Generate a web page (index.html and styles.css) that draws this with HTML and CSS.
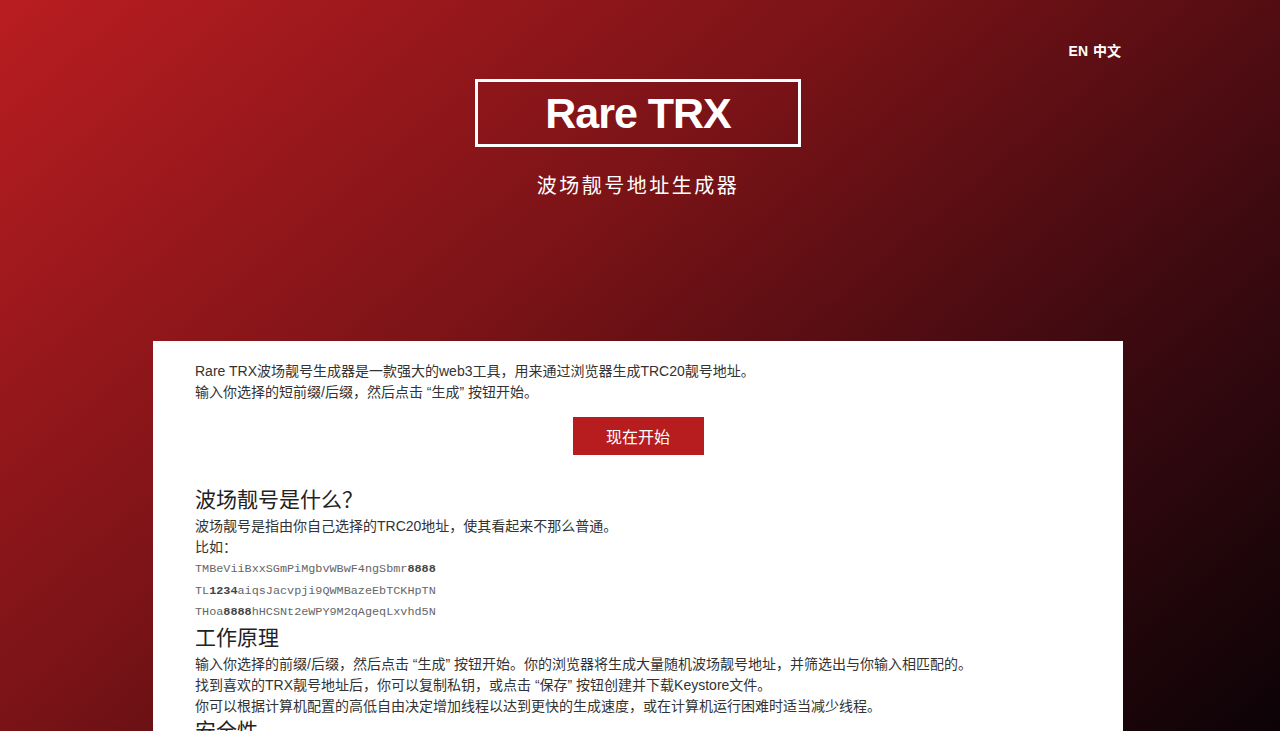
FILE: index.html
```html
<!DOCTYPE html>
<html lang="zh-CN">
<head>
<meta charset="utf-8">
<title>Rare TRX - 波场靓号地址生成器</title>
<link rel="stylesheet" href="styles.css">
</head>
<body>
<div class="page">
  <header class="hero">
    <nav class="lang">
      <a href="#" class="lang-link">EN</a>
      <a href="#" class="lang-link">中文</a>
    </nav>
    <div class="logo">Rare TRX</div>
    <div class="subtitle">波场靓号地址生成器</div>
  </header>
  <main class="card">
    <p class="text">Rare TRX波场靓号生成器是一款强大的web3工具，用来通过浏览器生成TRC20靓号地址。<br>输入你选择的短前缀/后缀，然后点击 “生成” 按钮开始。</p>
    <div class="cta-row"><button class="cta">现在开始</button></div>

    <h2 class="heading first">波场靓号是什么？</h2>
    <p class="text">波场靓号是指由你自己选择的TRC20地址，使其看起来不那么普通。<br>比如：</p>
    <div class="addr-list">
      <div class="addr">TMBeViiBxxSGmPiMgbvWBwF4ngSbmr<b>8888</b></div>
      <div class="addr">TL<b>1234</b>aiqsJacvpji9QWMBazeEbTCKHpTN</div>
      <div class="addr">THoa<b>8888</b>hHCSNt2eWPY9M2qAgeqLxvhd5N</div>
    </div>

    <h2 class="heading">工作原理</h2>
    <p class="text">输入你选择的前缀/后缀，然后点击 “生成” 按钮开始。你的浏览器将生成大量随机波场靓号地址，并筛选出与你输入相匹配的。<br>找到喜欢的TRX靓号地址后，你可以复制私钥，或点击 “保存” 按钮创建并下载Keystore文件。<br>你可以根据计算机配置的高低自由决定增加线程以达到更快的生成速度，或在计算机运行困难时适当减少线程。</p>

    <h2 class="heading">安全性</h2>
    <p class="text">所有地址均在你的浏览器本地生成，私钥不会通过网络传输。</p>
  </main>
</div>
</body>
</html>
```

FILE: styles.css
```css
html {
  min-height: 100%;
  background: linear-gradient(140deg, #b91d21 0%, #7a1317 40%, #3e0a10 70%, #0c0307 100%) fixed;
}
body {
  margin: 0;
  font-family: "Liberation Sans", "Noto Sans CJK SC", sans-serif;
  color: #333;
}
.page {
  width: 970px;
  margin: 0 auto;
  position: relative;
  left: -2px;
}
.hero {
  position: relative;
  display: flex;
  flex-direction: column;
  align-items: center;
  padding-top: 79px;
  height: 262px;
}
.lang {
  position: absolute;
  top: 41px;
  right: 2px;
  display: flex;
  gap: 5px;
}
.lang-link {
  color: #fff;
  font-weight: bold;
  font-size: 14px;
  text-decoration: none;
  line-height: 20px;
}
.logo {
  width: 320px;
  height: 62px;
  border: 3px solid #fff;
  color: #fff;
  font-weight: bold;
  font-size: 43px;
  letter-spacing: -1px;
  display: flex;
  align-items: center;
  justify-content: center;
}
.subtitle {
  margin-top: 25px;
  color: #fff;
  font-size: 20px;
  letter-spacing: 2.5px;
  line-height: 28px;
}
.card {
  background: #fff;
  padding: 20px 42px 40px;
  min-height: 500px;
}
.text {
  margin: 0;
  font-size: 14px;
  line-height: 21px;
  color: #333;
}
.cta-row {
  display: flex;
  justify-content: center;
  margin-top: 14px;
}
.cta {
  width: 131px;
  height: 38px;
  border: none;
  background: #b71c1f;
  color: #fff;
  font-family: "Liberation Sans", "Noto Sans CJK SC", sans-serif;
  font-size: 16px;
  cursor: pointer;
}
.heading {
  margin: 1px 0 3px;
  font-size: 21px;
  font-weight: normal;
  line-height: 26px;
  color: #222;
}
.heading.first {
  margin-top: 32px;
}
.addr-list {
  padding-top: 1px;
}
.addr {
  font-family: "Liberation Mono", monospace;
  font-size: 11.8px;
  line-height: 21.5px;
  color: #666;
}
.addr b {
  color: #444;
}
```
